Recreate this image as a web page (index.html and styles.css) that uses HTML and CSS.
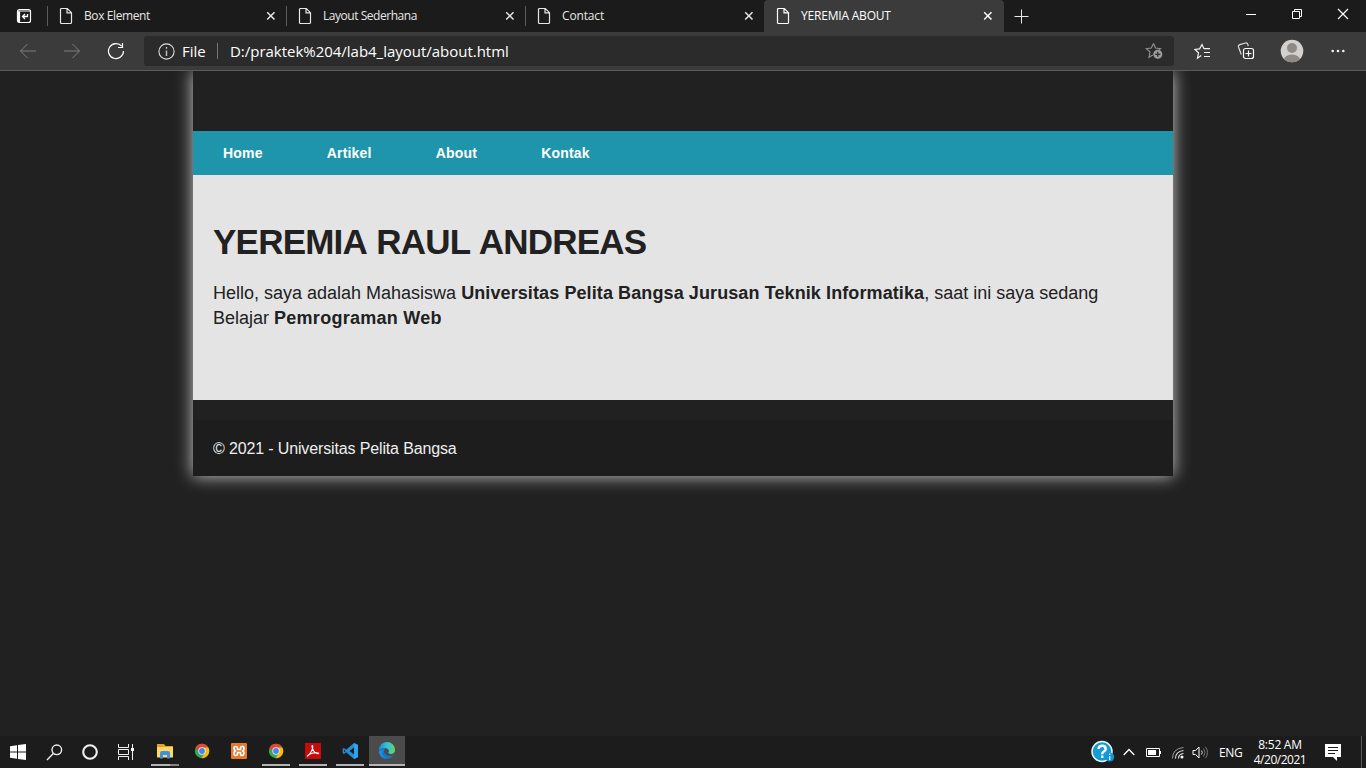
FILE: index.html
```html
<!DOCTYPE html>
<html lang="id">
<head>
<meta charset="utf-8">
<title>YEREMIA ABOUT</title>
<link rel="stylesheet" href="styles.css">
</head>
<body>
<svg class="defs" width="0" height="0">
  <symbol id="page" viewBox="0 0 14 18"><path d="M2.500 1.500h5.800l4.200 4.200v9.800a1 1 0 0 1-1 1h-9a1 1 0 0 1-1-1v-13a1 1 0 0 1 1-1zM8 1.500v4.300h4.500" fill="none" stroke="currentColor" stroke-width="1.200"/></symbol>
  <symbol id="close" viewBox="0 0 10 10"><path d="M1.200 1.200l7.300 7.300M8.500 1.200l-7.300 7.300" stroke="currentColor" stroke-width="1.500" fill="none"/></symbol>
  <symbol id="chrome" viewBox="0 0 16 16">
    <circle cx="8" cy="8" r="7.200" fill="#34a853"/>
    <path d="M1.700 4.500A7.200 7.200 0 0 1 14.300 4.500L8 4.800 5 9.500z" fill="#ea4335"/>
    <path d="M14.300 4.500A7.200 7.200 0 0 1 7.600 15.200L11 9.500 10 4.500z" fill="#fbbc05"/>
    <circle cx="8" cy="8" r="3.700" fill="#f1f1f1"/><circle cx="8" cy="8" r="2.900" fill="#4285f4"/>
  </symbol>
</svg>

<div class="tabstrip">
  <div class="tab-actions">
    <svg width="16" height="16" viewBox="0 0 16 16"><rect x="1.500" y="1.500" width="13" height="13" rx="2" fill="none" stroke="#fff" stroke-width="1.200"/><path d="M1.500 3h13" stroke="#fff"/><path d="M3 3.500v11" stroke="#fff" stroke-width="2.200"/><path d="M11.500 6v2.500H7M9 6L6.500 8.500 9 11" fill="none" stroke="#fff" stroke-width="1.300"/></svg>
  </div>
  <div class="tab"><svg class="doc"><use href="#page"/></svg><span class="t1">Box Element</span><svg class="x"><use href="#close"/></svg></div>
  <div class="tab"><svg class="doc"><use href="#page"/></svg><span class="t2">Layout Sederhana</span><svg class="x"><use href="#close"/></svg></div>
  <div class="tab"><svg class="doc"><use href="#page"/></svg><span class="t3">Contact</span><svg class="x"><use href="#close"/></svg></div>
  <div class="tab active"><svg class="doc"><use href="#page"/></svg><span class="t4">YEREMIA ABOUT</span><svg class="x"><use href="#close"/></svg></div>
  <div class="new-tab"><svg width="15" height="15"><path d="M7.500 0.500v14M0.500 7.500h14" stroke="#e8e8e8"/></svg></div>
  <div class="window-controls">
    <div><svg width="12" height="12"><path d="M1 6.500h10" stroke="#fff"/></svg></div>
    <div><svg width="12" height="12"><path d="M1.500 3.500h7v7h-7zM3.500 3.500v-2h7v7h-2" stroke="#fff" fill="none"/></svg></div>
    <div><svg width="12" height="12"><path d="M1 1l10 10M11 1L1 11" stroke="#fff" stroke-width="1.200"/></svg></div>
  </div>
</div>

<div class="toolbar">
  <div class="tool"><svg width="18" height="16"><path d="M17 8H1.500M8.500 1L1.500 8l7 7" stroke="#7e7e7e" fill="none"/></svg></div>
  <div class="tool"><svg width="18" height="16"><path d="M1 8h15.500M9.500 1l7 7-7 7" stroke="#7e7e7e" fill="none"/></svg></div>
  <div class="tool"><svg width="18" height="18"><path d="M14.700 4.200A7.500 7.500 0 1 0 16.500 9M15.500 1v4.500H11" stroke="#fff" stroke-width="1.200" fill="none"/></svg></div>
  <div class="address">
    <svg width="17" height="17"><circle cx="8.500" cy="8.500" r="7.600" stroke="#ddd" stroke-width="1.100" fill="none"/><path d="M8.500 7.500V13M8.500 4v1.800" stroke="#bbb" stroke-width="1.500"/></svg>
    <span class="scheme">File</span>
    <span class="url">D:/praktek%204/lab4_layout/about.html</span>
    <svg class="fav" width="19" height="18"><path d="M8.500 1.500l2 4.500 5 .6-2.500 2.300M8.500 1.500l-2.200 4.500-5 .6 3.700 3.400-1 5.200 3.800-2.200" stroke="#8d8d8d" stroke-width="1.200" fill="none"/><circle cx="12.800" cy="12.300" r="4.500" fill="#9b9b9b"/><path d="M12.800 9.800v5M10.300 12.300h5" stroke="#2b2b2b" stroke-width="1.200"/></svg>
  </div>
  <div class="tool"><svg width="17" height="17"><path d="M7.200 12.600L3.500 15.200l1-5.400L1 6.500l4.600-.6L8 1.500l2 4.200h6M10 9.500h6M10 13.500h6" stroke="#f2f2f2" stroke-width="1.200" fill="none"/></svg></div>
  <div class="tool"><svg width="18" height="18"><rect x="6.500" y="6.500" width="10" height="10" rx="2" stroke="#fff" stroke-width="1.200" fill="none"/><path d="M11.500 8.500v6M8.500 11.500h6" stroke="#fff" stroke-width="1.200"/><path d="M4.300 12.500L1.500 5a2 2 0 0 1 1.300-2.400L8.500 1a2 2 0 0 1 2.300 1.400l.5 1.600" stroke="#ddd" stroke-width="1.200" fill="none"/></svg></div>
  <div class="tool profile"><svg width="24" height="24"><defs><clipPath id="avatar"><circle cx="12" cy="12" r="11.300"/></clipPath></defs><circle cx="12" cy="12" r="11.300" fill="#d3d1cf"/><g clip-path="url(#avatar)" fill="#8e8a87"><circle cx="12" cy="9" r="5"/><ellipse cx="12" cy="21" rx="8" ry="5.500"/></g></svg></div>
  <div class="tool"><svg width="14" height="4" fill="#f2f2f2"><circle cx="1.700" cy="2" r="1.300"/><circle cx="7" cy="2" r="1.300"/><circle cx="12.300" cy="2" r="1.300"/></svg></div>
</div>

<div class="viewport">
  <div class="container">
    <header></header>
    <nav><a class="n1">Home</a><a class="n2">Artikel</a><a class="n3">About</a><a class="n4">Kontak</a></nav>
    <main>
      <h1>YEREMIA RAUL ANDREAS</h1>
      <p><span class="line1">Hello, saya adalah Mahasiswa <b>Universitas Pelita Bangsa Jurusan Teknik Informatika</b>, saat ini saya sedang</span><br><span class="line2">Belajar <b>Pemrograman Web</b></span></p>
    </main>
    <footer><span>© 2021 - Universitas Pelita Bangsa</span></footer>
  </div>
</div>

<div class="taskbar">
  <div class="system"><svg width="16" height="16" fill="#fff"><path d="M0 2.200l7-1v6.300H0zM8 1l8-1v7.500H8zM0 8.500h7v6.300l-7-1zM8 8.500h8V16l-8-1z"/></svg></div>
  <div class="system"><svg width="17" height="17"><circle cx="10.800" cy="5.800" r="4.800" stroke="#eee" stroke-width="1.400" fill="none"/><path d="M7.300 9.500L1 16" stroke="#eee" stroke-width="1.400"/></svg></div>
  <div class="system"><svg width="16" height="16"><circle cx="8" cy="8" r="6.800" stroke="#f0f0f0" stroke-width="2.100" fill="none"/></svg></div>
  <div class="system"><svg width="18" height="16"><path d="M1.500 0v3.500h10V0M1.500 16v-3.500h10V16M1.500 5.500h10v5h-10zM15.500 0v16" stroke="#f0f0f0" fill="none"/><rect x="14" y="4" width="3" height="3" fill="#fff"/></svg></div>
  <div class="apps">
    <div class="app open split"><svg width="18" height="16"><path d="M1 1h7l1.500 2H17v11H1z" fill="#e7a21c"/><path d="M1 4h16v10.500H1z" fill="#ffd766"/><path d="M4 15.500V10q0-2 2-2h6q2 0 2 2v5.500h-3V12H7v3.500z" fill="#3b93dc"/></svg></div>
    <div class="app"><svg width="16" height="16"><use href="#chrome"/></svg></div>
    <div class="app"><svg width="16" height="16"><rect width="16" height="16" rx="1" fill="#e9782a"/><path d="M5 3.500q-2 0-2 2T5 8q-2 0-2 2.300t2 2.200q1.500 0 1.500-1.500V9.500h3V11q0 1.500 1.500 1.500t2-2.200Q13 8 11 8q2-.2 2-2.500t-2-2q-1.500 0-1.500 1.500v1.500h-3V5Q6.500 3.500 5 3.500z" fill="none" stroke="#fff" stroke-width="1.700"/></svg></div>
    <div class="app open"><svg width="16" height="16"><use href="#chrome"/></svg></div>
    <div class="app open"><svg width="16" height="16"><rect width="16" height="16" fill="#c80a0a"/><path d="M2.500 13C5 11.500 8.500 6 7.700 2.800 7 2 6.800 3.300 7.300 5c1 3 3.500 6 6.200 5.700 1-1-4-1.500-8.500.3C3 12 2 13.500 2.500 13z" fill="none" stroke="#fff" stroke-width="1.100"/></svg></div>
    <div class="app open"><svg width="17" height="16"><path d="M12 0l4 2v12l-4 2L4.200 9.200 2 11 .7 10.200V5.800L2 5l2.200 1.800z" fill="#238fd7"/><path d="M12 4.500v7L7.500 8zM2 6.500L3.500 8 2 9.500z" fill="#1c1c1c"/><path d="M12 0l4 2v12l-4 2z" fill="#2da5ee"/></svg></div>
    <div class="app open current"><svg width="18" height="18"><defs><linearGradient id="edge"><stop offset="0" stop-color="#2189d7"/><stop offset=".5" stop-color="#32c3db"/><stop offset="1" stop-color="#65d65a"/></linearGradient></defs><path d="M1 8a8 8 0 0 1 16 0c0 3-2 4-4.500 4-2 0-2.500-1-2-1.700C12 8 9.500 6 7 6.200 4 6.300 1.500 8 1 10z" fill="url(#edge)"/><path d="M1 9C2 6.500 5 5.500 7.500 6.300 5.500 7.500 5.500 10 7 11.700c2 2.300 5.500 2.700 8.700 1.200A8 8 0 0 1 1 9z" fill="#1579ca"/><path d="M6 7.200c-3 2.500-2.500 7.500 3 9.800C4 17 1 13 1 9.500z" fill="#1b91de"/></svg></div>
  </div>
  <div class="tray">
    <svg class="help" width="24" height="24"><circle cx="11" cy="11.500" r="10" fill="#169bd5" stroke="#e8f7fd" stroke-width="1.500"/><path d="M7.500 9q.3-3.300 3.700-3.300T14.700 9q0 1.500-1.800 2.500-1.700.9-1.700 2.700M11.200 15.500V18" stroke="#fff" stroke-width="2.400" fill="none"/><circle cx="18.700" cy="17" r="4.500" fill="#1296d4"/><path d="M18.700 16v4M18.700 13.500v1.500" stroke="#fff" stroke-width="1.200"/></svg>
    <svg class="chevron" width="12" height="8"><path d="M.7 7L6 1.500 11.300 7" stroke="#fff" stroke-width="1.300" fill="none"/></svg>
    <svg class="battery" width="16" height="9"><path d="M.5.5h13v8H.5zM14.500 3v3" stroke="#fff" fill="none"/><path d="M2 2h8v5H2z" fill="#fff"/></svg>
    <svg class="wifi" width="14" height="13"><circle cx="11" cy="11" r="1.500" fill="#fff"/><path d="M7.500 12.500Q7.500 8 12.500 7.500M4.500 12.500Q4.500 5.500 12.500 4.500" stroke="#ddd" stroke-width="1.200" fill="none"/><path d="M1.500 12.500Q1.500 2.500 12.500 1.500" stroke="#999" fill="none"/></svg>
    <svg class="sound" width="17" height="13"><path d="M1 4.500h2.500L7 1v11L3.500 8.500H1z" stroke="#fff" fill="none"/><path d="M9.500 4.500q1.500 2 0 4" stroke="#ddd" fill="none"/><path d="M11.500 2.500q3 4 0 8M13.500.8q4 5.700 0 11.400" stroke="#777" fill="none"/></svg>
    <span class="lang">ENG</span>
    <div class="clock"><span class="time">8:52 AM</span><span class="date">4/20/2021</span></div>
    <svg class="notes" width="16" height="17"><path d="M0 0h16v13h-4v4l-4-4H0z" fill="#fff"/><path d="M3 3.500h10M3 6.500h10M3 9.500h7" stroke="#1c1c1c"/></svg>
    <div class="peek"></div>
  </div>
</div>
</body>
</html>
```
FILE: styles.css
```css
* { box-sizing: border-box; }
body { margin: 0; width: 1366px; height: 768px; overflow: hidden; display: flex; flex-direction: column; background: #212121; color: #fff; font-family: "Open Sans", "Noto Sans", sans-serif; }
svg { display: block; flex: none; }
.defs { position: absolute; }
span { white-space: nowrap; }

.tabstrip { height: 32px; flex: none; display: flex; background: #1b1b1b; }
.tab-actions { width: 48px; display: flex; align-items: center; justify-content: center; }
.tab { width: 240px; margin-left: -1px; padding: 0 11px 0 12px; display: flex; align-items: center; font-size: 12px; line-height: 16px; color: #e6e6e6; background: linear-gradient(#5c5c5c, #5c5c5c) 0 50% / 1px 20px no-repeat; }
.tab.active { background: #3b3b3b; border-radius: 4px 4px 0 0; color: #fff; }
.doc { width: 14px; height: 18px; margin-right: 11px; }
.tab span { flex: 1; padding-bottom: 1px; }
.t1 { letter-spacing: -.4px; }
.t2 { letter-spacing: -.46px; }
.t3 { letter-spacing: -.15px; }
.t4 { letter-spacing: -.2px; }
.x { width: 10px; height: 10px; }
.new-tab { width: 34px; display: flex; align-items: center; justify-content: center; }
.window-controls { display: flex; margin-left: auto; }
.window-controls div { width: 46px; padding-bottom: 4px; display: flex; align-items: center; justify-content: center; }

.toolbar { height: 39px; flex: none; display: flex; align-items: center; padding: 0 6px; background: #3b3b3b; border-bottom: 1px solid #5b5b5b; }
.tool { width: 44px; display: flex; align-items: center; justify-content: center; }
.tool.profile { width: 48px; }
.address { flex: 1; height: 30px; margin: 0 6px; padding: 0 10px 0 14px; display: flex; align-items: center; border-radius: 3px; background: #2b2b2b; font-size: 15px; letter-spacing: -.02px; }
.scheme { margin-left: 7px; width: 36px; border-right: 1px solid #777; line-height: 16px; }
.url { margin-left: 12px; padding-bottom: 1px; }
.fav { margin-left: auto; }

.viewport { flex: 1; overflow: hidden; }
.container { width: 980px; margin: 0 auto; box-shadow: 0 0 16px #ccc; background: #212121; font-family: "Liberation Sans", Arial, sans-serif; color: #212121; }
header { height: 60px; }
nav { height: 44px; display: flex; align-items: center; background: #1f95ab; color: #fff; font-size: 14px; font-weight: bold; }
nav a { padding: 0 32px; letter-spacing: .2px; }
nav .n1 { padding-left: 30px; }
main { height: 225px; padding: 45px 20px 0; background: #e4e4e4; }
h1 { margin: 0; font-size: 35px; line-height: 44px; letter-spacing: -.78px; word-spacing: 1.500px; }
main p { margin: 17px 0 0; font-size: 18px; line-height: 25px; }
.line1 b { letter-spacing: .1px; }
.line2 b { letter-spacing: .27px; }
footer { height: 76px; padding: 20px 20px 0; border-top: 20px solid #212121; background: #1d1d1d; color: #eee; font-size: 16px; line-height: 18px; letter-spacing: -.14px; }

.taskbar { height: 32px; flex: none; display: flex; background: #1c1c1c; }
.system { width: 36px; display: flex; align-items: center; justify-content: center; }
.apps { display: flex; gap: 1px; margin-left: 3px; }
.app { width: 36px; height: 30px; display: flex; align-items: center; justify-content: center; background: linear-gradient(#b5b5b5, #b5b5b5) 50% 100% / 0 2px no-repeat; }
.app.open { background-size: 28px 2px; }
.app.split { background-image: linear-gradient(90deg, #b5b5b5 19px, #858585 19px); }
.app.current { background-color: #4b4b4b; background-size: 36px 2px; }
.tray { margin-left: auto; display: flex; align-items: center; font-size: 12px; }
.chevron { margin-left: 8px; }
.battery { margin-left: 11px; }
.wifi { margin-left: 9px; }
.sound { margin-left: 7px; }
.lang { margin-left: 10px; width: 24px; letter-spacing: -.3px; }
.clock { width: 54px; margin-left: 10px; display: flex; flex-direction: column; align-items: center; line-height: 15px; padding-bottom: 1px; letter-spacing: -.25px; }
.date { letter-spacing: -.48px; }
.notes { margin-left: 18px; }
.peek { margin-left: 20px; width: 5px; height: 32px; border-left: 1px solid #5a5a5a; }
```
